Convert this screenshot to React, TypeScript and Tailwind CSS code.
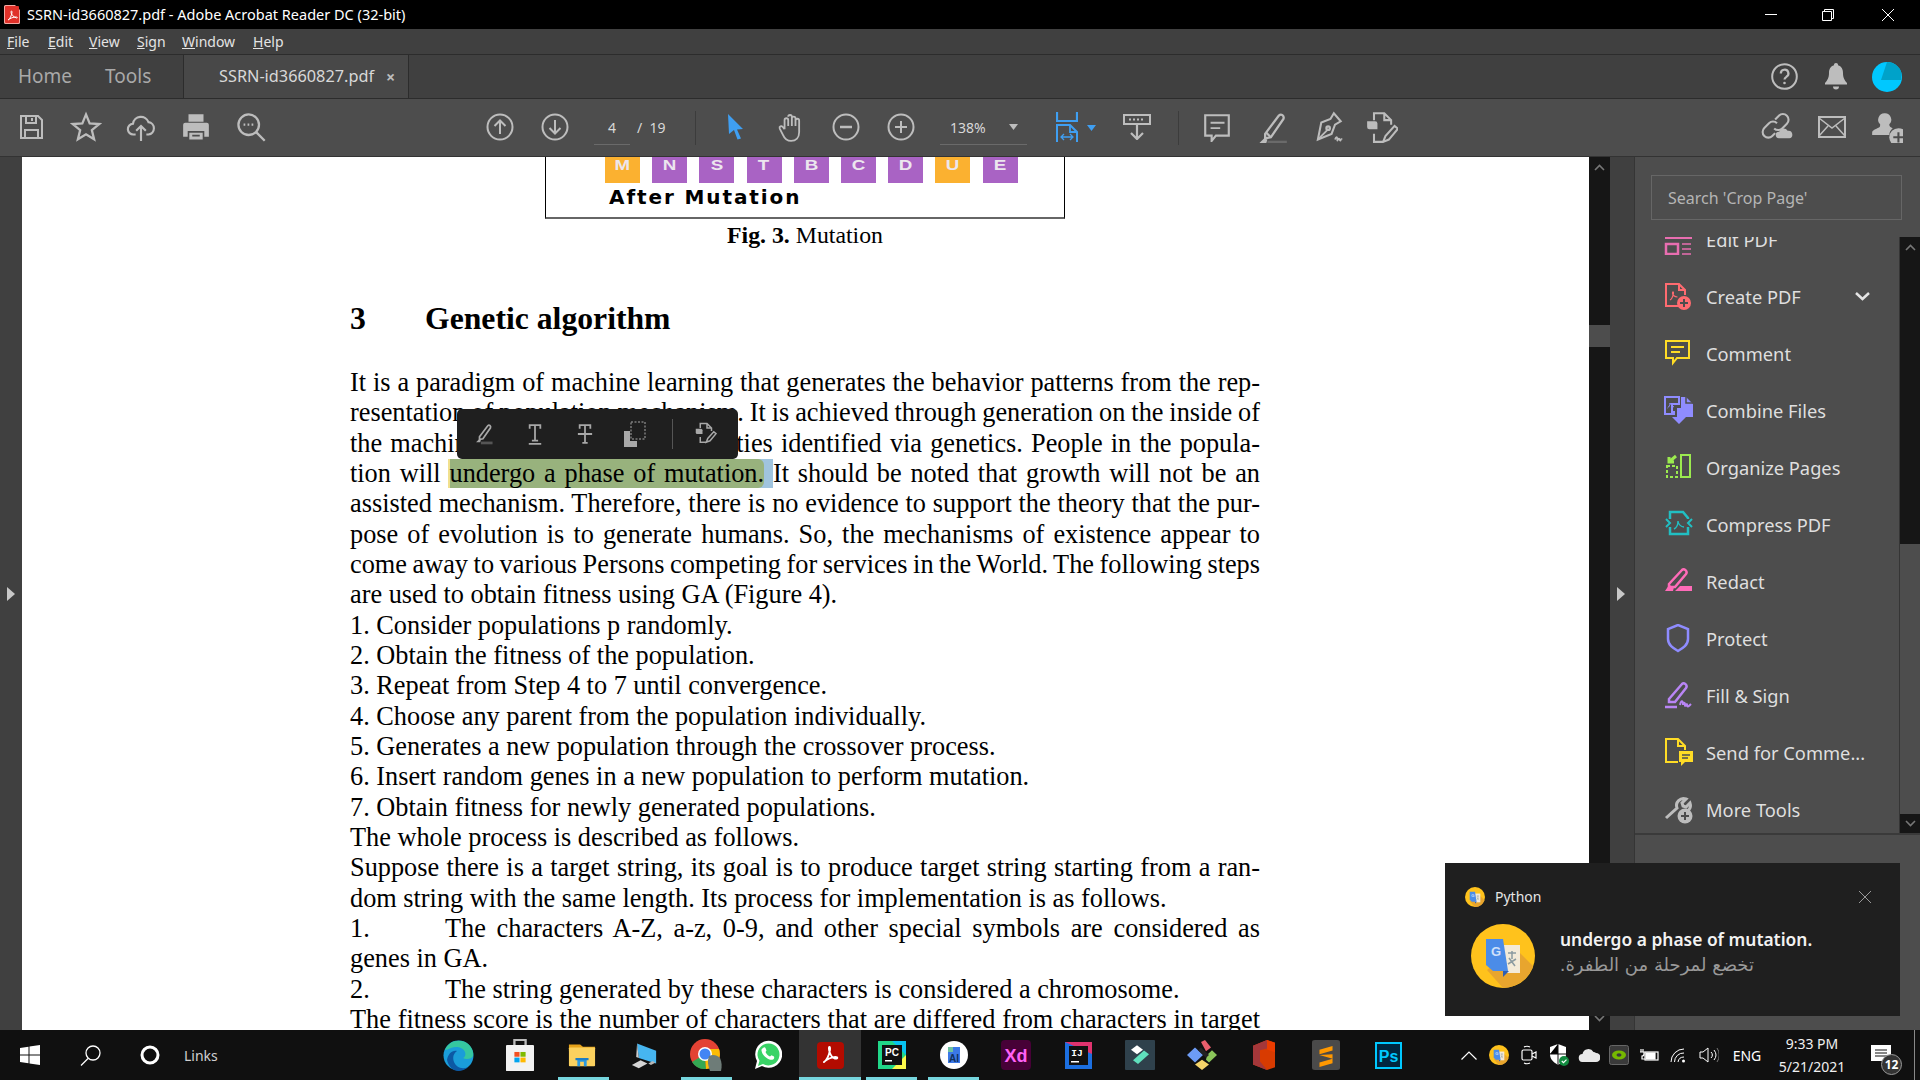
import React from 'react';

const UI_FONT = "font-['Noto_Sans','Open_Sans',sans-serif]";

function Svg({ size = 28, box = 28, children, className }: { size?: number; box?: number; children: React.ReactNode; className?: string }) {
  return (
    <svg width={size} height={size} viewBox={`0 0 ${box} ${box}`} fill="none" stroke="currentColor" strokeWidth={2} className={className}>
      {children}
    </svg>
  );
}

const ACRO = 'M7 20c3-2 5-7 6-12 .2-2 0-3-.6-3-.8 0-.6 3 .2 5 1 3 3 6 5 6.500 2 .4 3.400-.4 2.400-1.200-1.500-1-7 .4-10.500 2.700-2 1.400-3 2.500-2.500 2z';

/* ---------- top toolbar icons ---------- */
const toolIcons: Record<string, React.ReactNode> = {
  save: <Svg><path d="M4 3h17l4 4v18H4z" /><path d="M9 3v7h10V3M15 5v3M8 25v-8h13v8" /></Svg>,
  star: <Svg size={32}><path d="M14 3l3.200 7.800 8.300.6-6.400 5.300 2 8.100L14 20.400l-7.100 4.400 2-8.100-6.400-5.300 8.300-.6z" /></Svg>,
  cloud: <Svg size={30}><path d="M9 21H7a5 5 0 0 1-.5-10A7.500 7.500 0 0 1 21 9.500 5.800 5.800 0 0 1 21 21h-2" /><path d="M14 27V13M9.500 17.500L14 13l4.500 4.500" /></Svg>,
  print: <Svg size={30}><path fill="currentColor" stroke="none" d="M7 2h14v7H7zM4 10h20a2 2 0 0 1 2 2v11h-5v4H7v-4H2V12a2 2 0 0 1 2-2z" /><path stroke="#4d4d4d" strokeWidth={1.500} d="M7 18.500h14v8H7zM10.500 22h7" /></Svg>,
  zoom: <Svg size={32}><circle cx="12" cy="12" r="9" /><path d="M18.500 18.500L26 26" /><path strokeWidth={2} strokeDasharray="1.500 2" d="M7.500 12h9" /></Svg>,
  up: <Svg size={28}><circle cx="14" cy="14" r="12.500" /><path d="M14 21V8M8.500 13L14 7.500l5.500 5.500" /></Svg>,
  down: <Svg size={28}><circle cx="14" cy="14" r="12.500" /><path d="M14 7v13M8.500 15l5.500 5.500 5.500-5.500" /></Svg>,
  cursor: <svg width="20" height="26" viewBox="0 0 20 26"><path fill="#3f9ff2" d="M2 0l15 15-6 .5 4 9-3.500 1-3.500-9.500L3 20z" /></svg>,
  hand: <Svg size={30}><path d="M8 16V7.500a1.700 1.700 0 0 1 3.400 0V13m0-8.500a1.700 1.700 0 0 1 3.400 0V13m0-7a1.700 1.700 0 0 1 3.400 0V13m0-5a1.700 1.700 0 0 1 3.400 0V19c0 5-3 8-7.500 8-4 0-6-2-7.500-5.500L3.500 15.500c-.8-2 1.500-3 2.800-1.500L8 16" strokeWidth={1.700} /></Svg>,
  minus: <Svg size={28}><circle cx="14" cy="14" r="12.500" /><path d="M8 14h12" strokeWidth={2.500} /></Svg>,
  plus: <Svg size={28}><circle cx="14" cy="14" r="12.500" /><path d="M8 14h12M14 8v12" strokeWidth={2} /></Svg>,
  read: <svg width="28" height="26" viewBox="0 0 28 26" fill="none" stroke="currentColor" strokeWidth="2.200"><path strokeWidth="2" d="M1 1h26v9H1z" /><path strokeWidth="2" strokeDasharray="2 2" d="M6 5.500h16" /><path d="M14 11v14M8 19l6 6 6-6" /></svg>,
  comment: <Svg size={30}><path d="M3 3h22v19H13l-4 5v-5H3z" /><path d="M8 10h13M8 15h9" strokeWidth={1.700} /></Svg>,
  marker: <Svg size={32}><path d="M8 20L20 4c2-2 5 0 4 3L13 23l-5 1z" /><path d="M9 19l4 4" /><path fill="currentColor" stroke="none" d="M3 28l4-4 3 1-1 3z" /><path stroke="#6a6a6a" strokeWidth={4} d="M10 28h17" /></Svg>,
  sign: <Svg size={32}><path d="M20 2l-3 5-8 3-3 15 12-5 3-8 5-3z" strokeWidth={1.800} /><path d="M7 24l7-7" strokeWidth={1.500} /><circle cx="15" cy="15" r="1.500" /><path d="M21 25c1-3 2-3 2 0s1-3 2 0 1-2 2 0" strokeWidth={1.500} /></Svg>,
  share: <Svg size={32}><path fill="currentColor" stroke="none" d="M1 9h7a2 2 0 0 1 2 2v5H3a2 2 0 0 1-2-2z" /><path d="M7 8V2h9l6 6v4M16 2v6h6M7 20v7h8" strokeWidth={1.800} /><path d="M15 27l2-5 8-9 3 2.500-8 9.500z" strokeWidth={1.800} /></Svg>,
  link: <Svg size={32} box={34}><path d="M15 9l4-4a6 6 0 0 1 8.500 8.500l-5 5a6 6 0 0 1-8.500 0" strokeWidth={2.200} /><path d="M17 13a6 6 0 0 0-8.500 0l-5 5a6 6 0 0 0 8.500 8.500l3-3" strokeWidth={2.200} /><path fill="currentColor" stroke="none" d="M19 29a3.500 3.500 0 0 1 .3-7 5 5 0 0 1 9-1 4 4 0 0 1 1.700 8z" /></Svg>,
  mail: <svg width="28" height="22" viewBox="0 0 28 22" fill="none" stroke="currentColor" strokeWidth="2"><rect x="1" y="1" width="26" height="20" /><path d="M1 2l13 10L27 2M1 20l9-10M27 20l-9-10" strokeWidth="1.500" /></svg>,
  person: <Svg size={32}><path fill="currentColor" stroke="none" d="M12 2a5.500 5.500 0 0 1 4 9.500c0 2 1 2.500 3 3.500a8 8 0 0 0-3 6H1v-2c0-2 3-3 6-4.500 1-.7 1-1.500 1-3A5.500 5.500 0 0 1 12 2z" /><circle cx="24" cy="23" r="8" fill="currentColor" stroke="none" /><path stroke="#4d4d4d" strokeWidth={1.800} d="M19.500 23h9M24 18.500v9" /></Svg>,
};

function Tool({ name }: { name: string }) {
  return <div className="flex h-full w-[55px] items-center justify-center pb-[2px] text-[#bdbdbd]">{toolIcons[name]}</div>;
}

function FitIcon() {
  return (
    <svg width="22" height="30" viewBox="0 0 22 30" fill="none" stroke="#3f9ff2" strokeWidth="2.200" className="mb-[2px]">
      <path d="M1 0v9h20V0" />
      <path d="M1 30V13h13l7 7v10" strokeWidth="2" />
      <path d="M14 13v7h7" strokeWidth="1.800" />
      <path d="M5 25h12M8 22l-3 3 3 3M14 22l3 3-3 3" strokeWidth="1.300" />
    </svg>
  );
}

function Caret({ color = '#bdbdbd' }: { color?: string }) {
  return <svg width="9" height="6" viewBox="0 0 9 6"><path d="M0 0h9L4.500 6z" fill={color} /></svg>;
}

function TitleBar() {
  return (
    <div className="flex h-[29px] shrink-0 items-center bg-black pl-[4px] text-white">
      <svg width="16" height="19" viewBox="0 0 16 19" className="shrink-0">
        <path d="M0 1.500A1.500 1.500 0 0 1 1.500 0H11l5 5v12.500a1.500 1.500 0 0 1-1.500 1.500h-13A1.500 1.500 0 0 1 0 17.500z" fill="#f4a9a3" />
        <rect x="1" y="1" width="14" height="17" rx="1" fill="#e0312a" />
        <path d="M4 15c2-1 3.500-4.500 4-7.500 0-2-1-2-1-.5 0 2.500 2.500 5 5.500 6 1.500 0 1-1-.5-1-2.500 0-5.500 1-8 3z" stroke="#fff" strokeWidth="1" fill="none" />
      </svg>
      <span className="ml-[7px] text-[14.500px] leading-none">SSRN-id3660827.pdf - Adobe Acrobat Reader DC (32-bit)</span>
      <div className="ml-auto flex h-full items-center pr-[3px]">
        <div className="flex w-[52px] justify-center"><div className="h-px w-[12px] bg-white" /></div>
        <div className="flex w-[62px] justify-center">
          <svg width="12" height="12" viewBox="0 0 12 12" fill="none" stroke="#fff"><path d="M.5 2.500h9v9h-9zM2.500 2.500v-2h9v9h-2" /></svg>
        </div>
        <div className="flex w-[58px] justify-center">
          <svg width="12" height="12" viewBox="0 0 12 12" stroke="#fff"><path d="M0 0l12 12M12 0L0 12" /></svg>
        </div>
      </div>
    </div>
  );
}

function MenuBar() {
  const items = [['F', 'ile', 41], ['E', 'dit', 41], ['V', 'iew', 48], ['S', 'ign', 45], ['W', 'indow', 71], ['H', 'elp', 40]] as const;
  return (
    <div className="flex h-[26px] shrink-0 items-center border-b border-[#2c2c2c] bg-[#404040] pl-[7px] text-[14px] text-[#e4e4e4]">
      {items.map(([a, b, w]) => (
        <div key={a + b} style={{ width: w }}><span className="underline">{a}</span>{b}</div>
      ))}
    </div>
  );
}

function TabBar() {
  return (
    <div className="flex h-[44px] shrink-0 border-b border-[#2c2c2c] bg-[#404040] text-[#a9a9a9]">
      <div className="flex items-center pl-[18px] text-[19px]">
        <span className="w-[87px]">Home</span>
        <span className="w-[78px]">Tools</span>
      </div>
      <div className="flex w-[226px] items-center border-x border-[#2c2c2c] bg-[#484848] pl-[35px] text-[16.300px] text-[#d8d8d8]">
        SSRN-id3660827.pdf
        <span className="ml-[12px] text-[16px] font-bold text-[#bdbdbd]">×</span>
      </div>
      <div className="ml-auto flex items-center text-[#bdbdbd]">
        <div className="flex w-[52px] justify-center">
          <svg width="27" height="27" viewBox="0 0 27 27" fill="none" stroke="currentColor" strokeWidth="2"><circle cx="13.500" cy="13.500" r="12.300" /><path d="M9.800 10.500a3.800 3.800 0 1 1 5.600 3.300c-1.200.8-1.900 1.300-1.900 2.700" strokeWidth="2.200" /><circle cx="13.500" cy="20" r="1.300" fill="currentColor" stroke="none" /></svg>
        </div>
        <div className="flex w-[51px] justify-center">
          <svg width="22" height="27" viewBox="0 0 22 27" fill="currentColor"><path d="M11 0a2 2 0 0 1 2 2.300c3.500 1 5 4 5 7.700 0 5 1.500 7 4 10v1.500H0V20c2.500-3 4-5 4-10 0-3.700 1.500-6.700 5-7.700A2 2 0 0 1 11 0zM8 23.500h6a3 3 0 0 1-6 0z" /></svg>
        </div>
        <div className="flex w-[59px] justify-start pl-[11px]">
          <svg width="30" height="30" viewBox="0 0 30 30"><circle cx="15" cy="15" r="15" fill="#00c8ff" /><path d="M15 0a15 15 0 0 1 14.500 11L29 18H9z" fill="#00a2c9" /></svg>
        </div>
      </div>
    </div>
  );
}

function Toolbar() {
  return (
    <div className="flex h-[58px] shrink-0 items-center border-b border-[#333] bg-[#4d4d4d] pl-[3px] pr-[6px] text-[#d8d8d8]">
      {['save', 'star', 'cloud', 'print', 'zoom'].map((n) => <Tool key={n} name={n} />)}
      <div className="ml-[194px] flex h-full">
        <Tool name="up" />
        <Tool name="down" />
      </div>
      <div className="ml-[12px] flex h-[34px] w-[36px] items-center justify-center border-b border-[#6a6a6a] text-[14px]">4</div>
      <div className="ml-[7px] w-[58px] text-[14px]">/&nbsp;&nbsp;19</div>
      <div className="h-[34px] w-px bg-[#3c3c3c]" />
      <div className="ml-[12px] flex h-full">
        {['cursor', 'hand', 'minus', 'plus'].map((n) => <Tool key={n} name={n} />)}
      </div>
      <div className="ml-[12px] flex h-[34px] w-[87px] items-center justify-between border-b border-[#6a6a6a] pl-[10px] pr-[9px] text-[14px]">
        138% <Caret />
      </div>
      <div className="ml-[28px] flex w-[24px] justify-center"><FitIcon /></div>
      <div className="ml-[8px]"><Caret color="#3f9ff2" /></div>
      <div className="ml-[13px] h-full"><Tool name="read" /></div>
      <div className="ml-[14px] h-[34px] w-px bg-[#3c3c3c]" />
      <div className="ml-[10px] flex h-full">
        {['comment', 'marker', 'sign', 'share'].map((n) => <Tool key={n} name={n} />)}
      </div>
      <div className="ml-auto flex h-full">
        {['link', 'mail', 'person'].map((n) => <Tool key={n} name={n} />)}
      </div>
    </div>
  );
}

/* ---------- document ---------- */
const GENES = [
  ['M', 'o'], ['N', 'p'], ['S', 'p'], ['T', 'p'], ['B', 'p'], ['C', 'p'], ['D', 'p'], ['U', 'o'], ['E', 'p'],
] as const;

// the pdf text is set tighter than the browser would, so the spaces shrink first and then justify back out
function J({ children }: { children: React.ReactNode }) {
  return <div className="text-justify [word-spacing:-3px] [text-align-last:justify]">{children}</div>;
}

function Doc() {
  return (
    <div className="relative h-full w-[1567px] overflow-hidden bg-white font-['Liberation_Serif',serif] text-[26.300px] leading-[30.330px] text-black">
      <div className="ml-[523px] h-[62px] w-[520px] border-x border-b-2 border-x-black border-b-[#666]">
        <div className="flex gap-[12.200px] pl-[59px] font-['Liberation_Sans',sans-serif]">
          {GENES.map(([l, c]) => (
            <div key={l} className={`flex h-[26px] w-[35px] items-start justify-center text-[15px] leading-[15px] font-bold text-[#ece6ee] ${c === 'o' ? 'bg-[#fbb130]' : 'bg-[#a963c4]'}`}>
              <span className="scale-x-125">{l}</span>
            </div>
          ))}
        </div>
        <div className="mt-[2px] ml-[63px] font-['DejaVu_Sans',sans-serif] text-[20px] leading-[24px] font-bold tracking-[1.900px]">After Mutation</div>
      </div>
      <div className="ml-[705px] mt-[1px] text-[23.800px] leading-[30px]"><b>Fig. 3.</b> Mutation</div>
      <div className="ml-[328px] mt-[51px] flex text-[31.700px] leading-[36px] font-bold">
        <span className="w-[75px]">3</span>
        <span>Genetic algorithm</span>
      </div>
      <div className="ml-[328px] mt-[31px] w-[910px]">
        <J>It is a paradigm of machine learning that generates the behavior patterns from the rep-</J>
        <J>resentation of population mechanism. It is achieved through generation on the inside of</J>
        <J>the machine in terms of the capabilities identified via genetics. People in the popula-</J>
        <J>
          tion will{' '}
          <span className="bg-[#a0c4de]">
            <span className="rounded-r-[6px] bg-[#98b27d] shadow-[-2px_0_0_#f1e08e]">undergo a phase of mutation.</span>{' '}
          </span>
          It should be noted that growth will not be an
        </J>
        <J>assisted mechanism. Therefore, there is no evidence to support the theory that the pur-</J>
        <J>pose of evolution is to generate humans. So, the mechanisms of existence appear to</J>
        <J>come away to various Persons competing for services in the World. The following steps</J>
        <div>are used to obtain fitness using GA (Figure 4).</div>
        <div>1. Consider populations p randomly.</div>
        <div>2. Obtain the fitness of the population.</div>
        <div>3. Repeat from Step 4 to 7 until convergence.</div>
        <div>4. Choose any parent from the population individually.</div>
        <div>5. Generates a new population through the crossover process.</div>
        <div>6. Insert random genes in a new population to perform mutation.</div>
        <div>7. Obtain fitness for newly generated populations.</div>
        <div>The whole process is described as follows.</div>
        <J>Suppose there is a target string, its goal is to produce target string starting from a ran-</J>
        <div>dom string with the same length. Its process for implementation is as follows.</div>
        <div className="flex">
          <span className="w-[95px] shrink-0">1.</span>
          <div className="flex-1"><J>The characters A-Z, a-z, 0-9, and other special symbols are considered as</J></div>
        </div>
        <div>genes in GA.</div>
        <div className="flex">
          <span className="w-[95px] shrink-0">2.</span>
          <span>The string generated by these characters is considered a chromosome.</span>
        </div>
        <J>The fitness score is the number of characters that are differed from characters in target</J>
      </div>
      <FloatingBar />
    </div>
  );
}

function FloatingBar() {
  return (
    <div className="absolute left-[435px] top-[252px] flex h-[50px] w-[281px] items-center rounded-[5px] bg-[#1f1f1f] pl-[3px] text-[#a8a8a8]">
      <div className="flex w-[50px] justify-center">
        <svg width="22" height="24" viewBox="0 0 32 32" fill="none" stroke="currentColor" strokeWidth="2.500"><path d="M8 20L20 4c2-2 5 0 4 3L13 23l-5 1z" /><path fill="currentColor" stroke="none" d="M3 28l4-4 3 1-1 3z" /><path stroke="#555" strokeWidth="4" d="M10 29h17" /></svg>
      </div>
      <div className="flex w-[50px] justify-center">
        <svg width="16" height="24" viewBox="0 0 18 24" fill="none" stroke="currentColor" strokeWidth="2"><path d="M3 6V2h12v4M9 2v17M5.500 19.500h7M2 23h14" /></svg>
      </div>
      <div className="flex w-[50px] justify-center">
        <svg width="16" height="22" viewBox="0 0 18 24" fill="none" stroke="currentColor" strokeWidth="2"><path d="M3 6V2h12v4M9 2v20M6 22h6M1 12h16" /></svg>
      </div>
      <div className="flex w-[50px] justify-center">
        <svg width="22" height="26" viewBox="0 0 22 26" fill="none"><path fill="currentColor" d="M0 10h6v10h7v6H0z" /><path stroke="currentColor" strokeDasharray="2 1.500" d="M7 1h14v17H7z" /></svg>
      </div>
      <div className="mx-[12px] h-[30px] w-px bg-[#555]" />
      <div className="flex w-[44px] justify-center">
        <svg width="24" height="30" viewBox="0 0 32 32" fill="none" stroke="currentColor" strokeWidth="2"><path fill="currentColor" stroke="none" d="M1 9h7a2 2 0 0 1 2 2v5H3a2 2 0 0 1-2-2z" /><path d="M7 8V2h9l6 6v4M16 2v6h6M7 20v7h8" /><path d="M15 27l2-5 8-9 3 2.500-8 9.500z" /></svg>
      </div>
    </div>
  );
}

/* ---------- right panel ---------- */
const sideIcons: Record<string, React.ReactNode> = {
  edit: <g stroke="#e86eb0" transform="translate(0 12)"><path d="M1 1h27" strokeWidth="2" /><path d="M2 7h12v10H2z" strokeWidth="2.500" /><path d="M18 7h9M18 12h9M18 17h9" strokeWidth="1.500" /></g>,
  create: <g stroke="#ff6b70"><path d="M17 24H2V2h13l6 6v5M15 2v6h6" strokeWidth="2" /><path d="M6 18c2-1 3-4 3.500-7 0-1.500-1-1.500-1 0 0 2 2 4 5 4" strokeWidth="1.200" /><circle cx="20" cy="21" r="7" fill="#ff6b70" stroke="none" /><path d="M16 21h8M20 17v8" stroke="#4d4d4d" strokeWidth="2" /></g>,
  comment: <g stroke="#ffdc26"><path d="M2 2h23v17H13l-4 5v-5H2z" strokeWidth="2" /><path d="M7 8h13M7 13h9" strokeWidth="2" /></g>,
  combine: <g><path d="M1 1h14v7H8v8h2v2H1z" fill="none" stroke="#8f8cff" strokeWidth="2" /><path d="M3.500 12c1.500-1 2.500-3 2.500-5 1 2 2 3 4 4" stroke="#8f8cff" strokeWidth="1" /><path d="M17 1h5l7 7v13H17z" fill="#8f8cff" /><path d="M22 1v6h7" stroke="#4d4d4d" strokeWidth="1.500" /><path d="M13 12h4v9h5l-7 7-7-7h5z" fill="#8f8cff" /></g>,
  organize: <g stroke="#9bea4f" strokeWidth="2"><path d="M17 2h9v22h-9z" /><path d="M3 13h10v11H3z" strokeDasharray="3 2" /><path d="M12 3L5 9M5 4v5h5" strokeWidth="3" /></g>,
  compress: <g stroke="#21bfc3" strokeWidth="2.500"><path d="M6 9V2h13l5 6v1M6 17v7h18v-7" /><path d="M2 9l4 4-4 4M28 9l-4 4 4 4" strokeWidth="2" /><path d="M10 19c2-1 4-4 4-8 0 3 3 6 6 6" strokeWidth="1.400" /></g>,
  redact: <g><path d="M5 17L18 3c2-2 6 1 4 4L11 20H5z" stroke="#ff6bb8" strokeWidth="2.500" /><path d="M1 24l4-6 5 2-1 4zM11 24l5-5h12v5z" fill="#ff6bb8" /></g>,
  protect: <path d="M14 1l10 4v10c0 6-5 9-10 12-5-3-10-6-10-12V5z" stroke="#8f8cff" strokeWidth="2.500" />,
  fill: <g stroke="#b985f5" strokeWidth="2.500"><path d="M5 18L18 3c2-2 6 1 4 4L11 21H5z" /><path d="M1 26h12" /><path d="M16 24c1-5 3-5 3 0 0-3 2-3 2 0s2-3 2 0 2 1 4-1" strokeWidth="2" /></g>,
  send: <g><path d="M14 24H2V1h12l7 7v4M14 1v7h7" stroke="#ffdc26" strokeWidth="2" /><path d="M15 13h14v11h-8l-4 4v-4h-2z" fill="#ffdc26" /><path d="M18 17h8M18 20h6" stroke="#4d4d4d" strokeWidth="1.500" /></g>,
  more: <g><path d="M2 23l11-10a7 7 0 0 1 9-9l-4 4 1 3 3 1 4-4a7 7 0 0 1-9 9" stroke="#bdbdbd" strokeWidth="3" /><circle cx="21" cy="21" r="7.500" fill="#bdbdbd" /><path d="M17 21h8M21 17v8" stroke="#4d4d4d" strokeWidth="2" /></g>,
};

const SIDE_ITEMS = [
  ['edit', 'Edit PDF'], ['create', 'Create PDF'], ['comment', 'Comment'], ['combine', 'Combine Files'],
  ['organize', 'Organize Pages'], ['compress', 'Compress PDF'], ['redact', 'Redact'], ['protect', 'Protect'],
  ['fill', 'Fill & Sign'], ['send', 'Send for Comme...'], ['more', 'More Tools'],
];

function SidePanel() {
  return (
    <div className="flex w-[286px] shrink-0 flex-col border-l border-[#353535] bg-[#4d4d4d]">
      <div className="h-[80px] shrink-0 pl-[16px] pt-[18px]">
        <div className="flex h-[45px] w-[251px] items-center border border-[#666] pl-[16px] text-[16px] text-[#b5b5b5]">Search 'Crop Page'</div>
      </div>
      <div className="flex h-[598px] shrink-0 overflow-hidden border-b-2 border-[#3a3a3a]">
        <div className="-mt-[26px] flex-1">
          {SIDE_ITEMS.map(([k, label]) => (
            <div key={k} className="flex h-[57px] items-center pl-[29px] text-[18.300px] text-[#dfdfdf]">
              <svg width="30" height="30" viewBox="0 0 30 30" fill="none" className="shrink-0">{sideIcons[k]}</svg>
              <span className="ml-[12px]">{label}</span>
              {k === 'create' && (
                <svg width="15" height="9" viewBox="0 0 15 9" fill="none" stroke="#e4e4e4" strokeWidth="2.500" className="ml-[54px]"><path d="M1 1l6.500 6L14 1" /></svg>
              )}
            </div>
          ))}
        </div>
        <div className="flex w-[21px] shrink-0 flex-col border-l border-[#353535] bg-[#161616]">
          <div className="flex h-[21px] items-center justify-center">
            <svg width="11" height="7" viewBox="0 0 11 7" fill="none" stroke="#777" strokeWidth="1.600"><path d="M1 6l4.500-4.500L10 6" /></svg>
          </div>
          <div className="mt-[286px] h-[270px] bg-[#4d4d4d]" />
          <div className="flex flex-1 items-center justify-center">
            <svg width="11" height="7" viewBox="0 0 11 7" fill="none" stroke="#777" strokeWidth="1.600"><path d="M1 1l4.500 4.500L10 1" /></svg>
          </div>
        </div>
      </div>
    </div>
  );
}

function TriRight() {
  return <svg width="8" height="14" viewBox="0 0 8 14"><path d="M0 0l8 7-8 7z" fill="#c8c8c8" /></svg>;
}

function DocScroll() {
  return (
    <div className="flex w-[21px] shrink-0 flex-col bg-[#161616]">
      <div className="flex h-[20px] items-center justify-center">
        <svg width="11" height="7" viewBox="0 0 11 7" fill="none" stroke="#777" strokeWidth="1.600"><path d="M1 6l4.500-4.500L10 6" /></svg>
      </div>
      <div className="mt-[148px] h-[22px] bg-[#4d4d4d]" />
      <div className="flex flex-1 items-end justify-center pb-[8px]">
        <svg width="11" height="7" viewBox="0 0 11 7" fill="none" stroke="#777" strokeWidth="1.600"><path d="M1 1l4.500 4.500L10 1" /></svg>
      </div>
    </div>
  );
}

function TranslateIcon({ size }: { size: number }) {
  return (
    <svg width={size} height={size} viewBox="0 0 64 64">
      <circle cx="32" cy="32" r="32" fill="#ffc21c" />
      <path d="M44 24l18 18A32 32 0 0 1 32 64L16 46z" fill="#e8a52e" />
      <rect x="32" y="21" width="17" height="28" fill="#f3ead8" />
      <path d="M37 29h8M41 27v8M37 40l8-5M38 34l6 8" stroke="#8a9aa0" strokeWidth="1.500" fill="none" />
      <path d="M15 15h17l5 32H22l-7-6z" fill="#4b8ce8" />
      <path d="M32 47h6l-6 6z" fill="#2f5fb3" />
      <text x="25" y="32" textAnchor="middle" fontSize="13" fontWeight="700" fontFamily="Liberation Sans, sans-serif" fill="#cfe0fa">G</text>
    </svg>
  );
}

function Notification() {
  return (
    <div className="absolute bottom-[14px] right-[20px] h-[153px] w-[455px] bg-[#1f1f1f] text-white">
      <div className="flex items-center pl-[20px] pr-[29px] pt-[23px]">
        <TranslateIcon size={20} />
        <span className="ml-[10px] text-[14px] text-[#e6e6e6]">Python</span>
        <svg width="12" height="12" viewBox="0 0 12 12" stroke="#999" className="ml-auto"><path d="M0 0l12 12M12 0L0 12" /></svg>
      </div>
      <div className="mt-[17px] flex pl-[26px]">
        <TranslateIcon size={64} />
        <div className="ml-[25px] pt-[3px]">
          <div className="text-[17.400px] leading-[24px] font-semibold text-[#f2f2f2]">undergo a phase of mutation.</div>
          <div dir="rtl" className="mt-[1px] w-[194px] font-['DejaVu_Sans',sans-serif] text-[18px] leading-[26px] whitespace-nowrap text-[#999]">تخضع لمرحلة من الطفرة.</div>
        </div>
      </div>
    </div>
  );
}

/* ---------- taskbar ---------- */
const appIcons: { k: string; bar?: string; active?: boolean; icon: React.ReactNode }[] = [
  { k: 'edge', icon: (
    <svg width="31" height="31" viewBox="0 0 31 31"><circle cx="15.500" cy="15.500" r="15" fill="#1a9dd9" /><path d="M2 10C5 2 14-1 22 2c6 3 9 9 8 14-1 3-7 4-10 2 2-1 3-3 2-6-2-5-9-6-14-4-3 1-4 2-6 2z" fill="#35c7a0" /><path d="M4 20c1-6 5-10 10-9-3 2-5 6-3 11 2 5 8 8 14 5-4 4-10 5-14 3-4-2-6-6-7-10z" fill="#0c59a4" /></svg>
  ) },
  { k: 'store', icon: (
    <svg width="28" height="32" viewBox="0 3 30 37" preserveAspectRatio="none"><path d="M9 14V4h12v10" fill="none" stroke="#bbb" strokeWidth="2.500" /><rect y="10" width="30" height="30" rx="1" fill="#f2f2f2" /><rect x="9" y="18" width="5.500" height="5.500" fill="#f25022" /><rect x="15.500" y="18" width="5.500" height="5.500" fill="#7fba00" /><rect x="9" y="24.500" width="5.500" height="5.500" fill="#00a4ef" /><rect x="15.500" y="24.500" width="5.500" height="5.500" fill="#ffb900" /></svg>
  ) },
  { k: 'folder', bar: 'left-[7px] right-[4px]', icon: (
    <svg width="28" height="24" viewBox="0 0 30 32" preserveAspectRatio="none"><path d="M1 2h12l3 3h13v6H1z" fill="#e6a21a" /><rect x="1" y="6" width="28" height="25" rx="1" fill="#fbd15e" /><path d="M10 31V20h10v11h-3v-6h-4v6z" fill="#2c9be0" /><path d="M8 20h14v3H8z" fill="#1d7dc5" /></svg>
  ) },
  { k: 'desktop', icon: (
    <svg width="26" height="27" viewBox="0 0 30 34" preserveAspectRatio="none"><path d="M7 2l22 9v16L9 20z" fill="#46b5f0" /><path d="M7 2l2 18-3-1z" fill="#ccc" /><path d="M1 29l10-6 8 4-10 6z" fill="#d4d4d4" /><path d="M20 27l5-3 3 2-5 3z" fill="#b5b5b5" /></svg>
  ) },
  { k: 'chrome', bar: 'left-[6px] right-[5px]', icon: (
    <svg width="34" height="34" viewBox="0 0 34 34"><circle cx="16" cy="16" r="15" fill="#e34234" /><path d="M16 16L3 24a15 15 0 0 0 14 7z" fill="#34a853" /><path d="M16 16l1 15a15 15 0 0 0 13-20H16z" fill="#fbbc05" /><circle cx="16" cy="16" r="7" fill="#fff" /><circle cx="16" cy="16" r="5.500" fill="#4285f4" /><path d="M20 18c4-2 8-1 11 2 2 4 2 9 1 13H21c-2-5-3-10-1-15z" fill="#6e7c78" /></svg>
  ) },
  { k: 'whatsapp', icon: (
    <svg width="28" height="30" viewBox="0 0 28 30"><path d="M1 29l2-8A13.500 13.500 0 1 1 8 26z" fill="#fff" /><path d="M4 26l1.500-5.200A11 11 0 1 1 9 24z" fill="#39d366" /><path d="M9 8c1-1 2-1 2.500 0l1 2.500-1 1.500c1 2 2.500 3.500 4.500 4.500l1.500-1.200 2.500 1.200c.5 1 0 2.500-1 3-4 1.500-11-4-11.500-9-.2-1 .5-2 1.500-2.500z" fill="#fff" /></svg>
  ) },
  { k: 'acrobat', active: true, bar: 'left-0 right-0', icon: (
    <svg width="27" height="27" viewBox="0 0 27 27"><rect width="27" height="27" rx="4" fill="#b30b00" /><path d={ACRO} fill="none" stroke="#fff" strokeWidth="1.800" /></svg>
  ) },
  { k: 'pycharm', bar: 'left-[5px] right-[6px]', icon: (
    <svg width="28" height="28" viewBox="0 0 28 28"><path d="M0 0h28v28H0z" fill="#21d789" /><path d="M14 0h14v14z" fill="#07c3f2" /><path d="M28 14v14H14z" fill="#fcf84a" /><rect x="4" y="4" width="20" height="20" fill="#111" /><text x="14" y="15" textAnchor="middle" fontSize="10" fontWeight="700" fontFamily="Liberation Sans, sans-serif" fill="#fff">PC</text><rect x="7" y="19" width="7" height="1.500" fill="#fff" /></svg>
  ) },
  { k: 'ai', bar: 'left-[5px] right-[6px]', icon: (
    <svg width="28" height="28" viewBox="0 0 28 28"><circle cx="14" cy="14" r="14" fill="#fff" /><path d="M8 6h12v16H8z" fill="#3b78e7" /><path d="M8 6h5v5H8z" fill="#6ec1a0" /><text x="14" y="21" textAnchor="middle" fontSize="10" fontWeight="700" fontFamily="Liberation Sans, sans-serif" fill="#10305c">AI</text></svg>
  ) },
  { k: 'xd', icon: (
    <svg width="30" height="30" viewBox="0 0 30 30"><rect width="30" height="30" rx="4" fill="#470137" /><text x="15" y="22" textAnchor="middle" fontSize="18" fontWeight="700" fontFamily="Liberation Sans, sans-serif" fill="#ff61f6">Xd</text></svg>
  ) },
  { k: 'ij', icon: (
    <svg width="27" height="27" viewBox="0 0 27 27"><rect width="27" height="27" fill="#1c6fe0" /><path d="M0 0h27v12z" fill="#e0336f" /><rect x="4" y="4" width="19" height="19" fill="#111" /><text x="12" y="14" textAnchor="middle" fontSize="9.500" fontWeight="700" fontFamily="Liberation Mono, monospace" fill="#fff">IJ</text><rect x="6" y="19" width="8" height="1.500" fill="#fff" /></svg>
  ) },
  { k: 'filmora', icon: (
    <svg width="30" height="30" viewBox="0 0 30 40" preserveAspectRatio="none"><rect width="30" height="40" rx="1" fill="#2f414c" /><path d="M12 7l6 6-6 6-6-6z" fill="#fff" /><path d="M19 14l5 5-11 13-5-5z" fill="#5fe0bd" /></svg>
  ) },
  { k: 'git', icon: (
    <svg width="30" height="30" viewBox="0 0 30 32" preserveAspectRatio="none"><path d="M0 16l8-8 8 8-8 8z" fill="#6d9cf5" /><path d="M14 2l4-2 6 8-5 4z" fill="#ea5f6d" /><path d="M20 16l5-5 5 5-8 8-3-3z" fill="#8bc65a" /><path d="M8 26l7-5 7 5-7 6z" fill="#f5d56a" /><path d="M14 8l8 8-3 3-8-8z" fill="#222" /></svg>
  ) },
  { k: 'office', icon: (
    <svg width="24" height="30" viewBox="0 0 24 32" preserveAspectRatio="none"><path d="M1 6l14-6 8 3v26l-8 3-14-6z" fill="#d83b01" /><path d="M1 6l14-6v9L8 11v12l7 9-14-6z" fill="#a4373a" /><path d="M15 0l8 3v10l-8-3z" fill="#eb3c00" /></svg>
  ) },
  { k: 'sublime', icon: (
    <svg width="28" height="30" viewBox="0 0 30 40" preserveAspectRatio="none"><rect width="30" height="40" rx="3" fill="#4a4a4a" /><path d="M22 8v6L8 19v-6zM8 20l14 5v-6z M22 25v6L8 36v-6z" fill="#ff9800" /></svg>
  ) },
  { k: 'ps', icon: (
    <svg width="27" height="27" viewBox="0 0 27 27"><rect x="1" y="1" width="25" height="25" fill="#00263f" stroke="#00c8ff" strokeWidth="2" /><text x="13.500" y="20" textAnchor="middle" fontSize="16" fontWeight="700" fontFamily="Liberation Sans, sans-serif" fill="#00c8ff">Ps</text></svg>
  ) },
];

function TraySlot({ children }: { children: React.ReactNode }) {
  return <div className="flex w-[30px] justify-center text-white">{children}</div>;
}

function Taskbar() {
  return (
    <div className="flex h-[50px] shrink-0 items-center bg-[#101010] text-white">
      <div className="flex w-[60px] justify-center">
        <svg width="20" height="20" viewBox="0 0 20 20" fill="#fff"><path d="M0 3l8.500-1.200v7.700H0zM9.500 1.600L20 0v9.500H9.500zM0 10.500h8.500v7.700L0 17zM9.500 10.500H20V20L9.500 18.400z" /></svg>
      </div>
      <div className="flex w-[60px] justify-center">
        <svg width="21" height="21" viewBox="0 0 21 21" fill="none" stroke="#fff" strokeWidth="1.300"><circle cx="13" cy="8" r="7" /><path d="M8 13.500L1 20.500" /></svg>
      </div>
      <div className="flex w-[60px] justify-center">
        <svg width="20" height="20" viewBox="0 0 20 20" fill="none" stroke="#fff" strokeWidth="3"><circle cx="10" cy="10" r="8" /></svg>
      </div>
      <div className="w-[247px] pl-[4px] text-[14px] text-[#d0d0d0]">Links</div>
      {appIcons.map((a) => (
        <div key={a.k} className={`relative flex h-full w-[62px] items-center justify-center ${a.active ? 'bg-[#333]' : ''}`}>
          {a.icon}
          {a.bar && <div className={`absolute bottom-0 h-[3px] bg-[#76d6de] ${a.bar}`} />}
        </div>
      ))}
      <div className="ml-auto flex h-full items-center">
        <TraySlot><svg width="16" height="9" viewBox="0 0 16 9" fill="none" stroke="#fff" strokeWidth="1.200"><path d="M.5 8.500L8 1l7.500 7.500" /></svg></TraySlot>
        <TraySlot><TranslateIcon size={20} /></TraySlot>
        <TraySlot><svg width="16" height="20" viewBox="0 0 16 20" fill="none" stroke="#fff" strokeWidth="1.200"><rect x="1" y="5" width="10" height="10" rx="1.500" /><path d="M11 9l4-2v6l-4-2M3 2c2-1 4-1 6 0M3 18c2 1 4 1 6 0" /></svg></TraySlot>
        <TraySlot><svg width="20" height="22" viewBox="0 0 20 22"><path d="M9 0l8 3v7c0 5-3 8-8 11-5-3-8-6-8-11V3z" fill="#fff" /><path d="M9 0v10H1M9 10h8M9 10v11" stroke="#101010" /><circle cx="15" cy="17" r="5" fill="#128a3f" /><path d="M12.800 17l1.700 1.700 3-3" stroke="#fff" strokeWidth="1.200" fill="none" /></svg></TraySlot>
        <TraySlot><svg width="22" height="14" viewBox="0 0 22 14"><path d="M5 14a4 4 0 0 1-.5-8 6 6 0 0 1 11-2 4.500 4.500 0 0 1 2.500 1 4.500 4.500 0 0 1 0 9z" fill="#e8e8e8" /></svg></TraySlot>
        <TraySlot><svg width="20" height="20" viewBox="0 0 20 20"><rect x=".5" y=".5" width="19" height="19" rx="2" fill="#3a3a3a" stroke="#666" /><ellipse cx="10" cy="10" rx="7" ry="4.500" fill="#76b900" /><ellipse cx="10" cy="10" rx="2.500" ry="1.800" fill="#3a3a3a" /></svg></TraySlot>
        <TraySlot><svg width="20" height="16" viewBox="0 0 20 16" fill="none" stroke="#fff" strokeWidth="1.200"><rect x="6" y="5" width="13" height="8" /><rect x="7" y="6" width="9" height="6" fill="#fff" /><path d="M4 2v3M2 2v3M1 5h4v2c0 1-1 2-2 2v3h3" /></svg></TraySlot>
        <TraySlot><svg width="18" height="16" viewBox="0 0 18 16" fill="none" stroke="#fff"><path d="M1 15a13 13 0 0 1 13-13M4.500 15A9 9 0 0 1 14 6M8 15a6 6 0 0 1 6-5" /><circle cx="13.500" cy="14" r="1.500" fill="#fff" stroke="none" /></svg></TraySlot>
        <TraySlot><svg width="20" height="16" viewBox="0 0 20 16" fill="none" stroke="#fff"><path d="M1 5h3l5-4v14l-5-4H1z" /><path d="M12 5a4 4 0 0 1 0 6M15 3a8 8 0 0 1 0 10" /><path d="M18 1a12 12 0 0 1 0 14" stroke="#777" /></svg></TraySlot>
        <div className="w-[46px] text-center text-[14px]">ENG</div>
        <div className="w-[84px] text-center text-[14px] leading-[23px] text-[#f0f0f0]">
          <div>9:33 PM</div>
          <div>5/21/2021</div>
        </div>
        <div className="relative flex h-full w-[60px] items-center justify-center">
          <svg width="20" height="17" viewBox="0 0 20 17" className="-mt-[3px] ml-[-6px]"><path d="M0 0h20v16H0z" fill="#fff" /><path d="M4 5h12M4 8h12M4 11h12" stroke="#101010" /></svg>
          <div className="absolute left-[27px] top-[24px] flex h-[21px] w-[21px] items-center justify-center rounded-full border border-[#999] bg-[#333] text-[12px] font-bold">12</div>
        </div>
        <div className="h-full w-px bg-[#888]" />
        <div className="w-[5px]" />
      </div>
    </div>
  );
}

export default function App() {
  return (
    <div className={`flex h-[1080px] w-[1920px] flex-col overflow-hidden ${UI_FONT}`}>
      <TitleBar />
      <MenuBar />
      <TabBar />
      <Toolbar />
      <div className="relative flex min-h-0 flex-1">
        <div className="flex w-[22px] shrink-0 items-center justify-center bg-[#404040]"><TriRight /></div>
        <Doc />
        <DocScroll />
        <div className="flex w-[24px] shrink-0 items-center justify-start bg-[#404040] pl-[7px]"><TriRight /></div>
        <SidePanel />
        <Notification />
      </div>
      <Taskbar />
    </div>
  );
}
